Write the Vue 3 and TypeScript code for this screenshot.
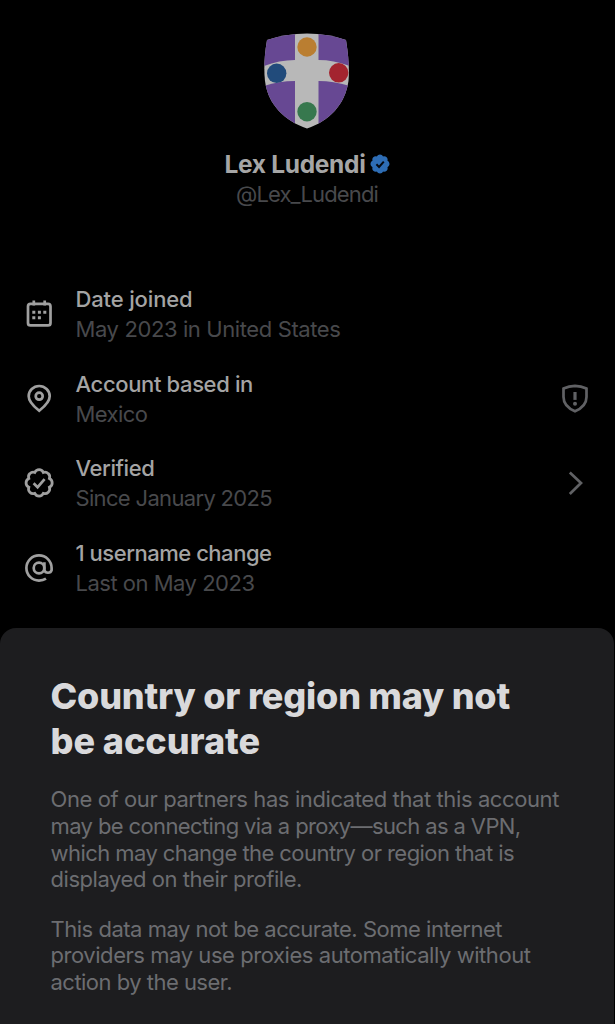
<script setup lang="ts">
import type { Directive } from 'vue'

interface Line {
  text: string
  width: number
}

interface Row {
  icon: 'calendar' | 'pin' | 'verified' | 'at'
  title: Line
  detail: Line
  action?: 'shield' | 'chevron'
}

// Tracks a line of text so that it spans the given width.
const vFit: Directive<HTMLElement, number> = {
  mounted(el, { value }) {
    const count = el.textContent?.length ?? 1
    const natural = el.getBoundingClientRect().width
    el.style.letterSpacing = `${(value - natural) / count}px`
  },
}

const rows: Row[] = [
  {
    icon: 'calendar',
    title: { text: 'Date joined', width: 117 },
    detail: { text: 'May 2023 in United States', width: 265 },
  },
  {
    icon: 'pin',
    title: { text: 'Account based in', width: 177.5 },
    detail: { text: 'Mexico', width: 72 },
    action: 'shield',
  },
  {
    icon: 'verified',
    title: { text: 'Verified', width: 79 },
    detail: { text: 'Since January 2025', width: 196.5 },
    action: 'chevron',
  },
  {
    icon: 'at',
    title: { text: '1 username change', width: 196 },
    detail: { text: 'Last on May 2023', width: 179 },
  },
]

const heading: Line[] = [
  { text: 'Country or region may not', width: 459.5 },
  { text: 'be accurate', width: 209.5 },
]

const paragraphs: Line[][] = [
  [
    { text: 'One of our partners has indicated that this account', width: 508.5 },
    { text: 'may be connecting via a proxy—such as a VPN,', width: 470 },
    { text: 'which may change the country or region that is', width: 463.5 },
    { text: 'displayed on their profile.', width: 251.5 },
  ],
  [
    { text: 'This data may not be accurate. Some internet', width: 451.5 },
    { text: 'providers may use proxies automatically without', width: 480 },
    { text: 'action by the user.', width: 181.5 },
  ],
]

const badge =
  'M20.4 12c0-1.3-.8-2.4-1.9-3 .4-1.2.1-2.6-.8-3.4-.9-.9-2.2-1.2-3.4-.8-.5-1.2-1.6-1.9-2.9-1.9s-2.4.7-3 1.9c-1.2-.4-2.5-.1-3.4.8-.9.8-1.1 2.2-.7 3.4-1.2.6-1.9 1.7-1.9 3s.7 2.4 1.9 3c-.4 1.2-.2 2.6.7 3.4.9.9 2.2 1.2 3.4.8.6 1.2 1.7 1.9 3 1.9s2.4-.7 2.9-1.9c1.2.4 2.5.1 3.4-.8.9-.8 1.2-2.2.8-3.4 1.1-.6 1.9-1.7 1.9-3z'
</script>

<template>
  <main class="screen">
    <header class="profile">
      <svg class="crest" width="86" height="96" viewBox="0 0 86 96">
        <defs>
          <clipPath id="crest-shape">
            <path d="M3 7Q22 .5 43 .5T82 7Q86 32 84.500 48C81 72 65 88 43 95.500C21 88 4 72 1 48Q-1 30 3 7Z" />
          </clipPath>
        </defs>
        <g clip-path="url(#crest-shape)">
          <rect width="86" height="96" fill="#b8b8b8" />
          <path d="M0 0H31V27Q15 27 0 33Z" fill="#674893" />
          <path d="M54.500 0H86V33Q70 27 54.500 27Z" fill="#674893" />
          <path d="M0 53Q15 48 31 48V96H0Z" fill="#674893" />
          <path d="M54.500 48Q70 48 86 53V96H54.500Z" fill="#674893" />
        </g>
        <circle cx="43" cy="14" r="9.700" fill="#ba7e31" />
        <circle cx="12.700" cy="40.300" r="9.700" fill="#214b7b" />
        <circle cx="74.700" cy="39.800" r="9.700" fill="#a3242f" />
        <circle cx="43" cy="78.700" r="9.700" fill="#37784e" />
      </svg>
      <div class="name">
        <span v-fit="141">Lex Ludendi</span>
        <svg width="20" height="20" viewBox="1.900 2.500 19 19">
          <path :d="badge" fill="#2e6db5" />
          <path d="M8 12.300l2.500 2.500 4.500-5" fill="none" stroke="#050a12" stroke-width="1.900" />
        </svg>
      </div>
      <div class="handle"><span v-fit="142">@Lex_Ludendi</span></div>
    </header>

    <ul class="facts">
      <li v-for="row in rows" :key="row.title.text" class="fact">
        <svg class="icon" width="30" height="30" viewBox="0 0 30 30">
          <template v-if="row.icon === 'calendar'">
            <rect x="4" y="4.900" width="22.500" height="21.500" rx="2.500" />
            <path d="M9.800 1.500v5M20.700 1.500v5" />
            <path
              class="solid"
              d="M8.300 11.800h3v3h-3zM13.900 11.800h3v3h-3zM19.300 11.800h3v3h-3zM8.300 17.200h3v3h-3zM13.900 17.200h3v3h-3z"
            />
          </template>
          <template v-else-if="row.icon === 'pin'">
            <path d="M15.200 26.700C11 23.300 4.700 18.500 4.700 12.200a10.500 10.200 0 0 1 21 0C25.700 18.500 19.400 23.300 15.200 26.700Z" />
            <circle cx="15.200" cy="12.200" r="3.500" />
          </template>
          <template v-else-if="row.icon === 'verified'">
            <g transform="translate(-1.400 -2.500) scale(1.450)">
              <path :d="badge" stroke-width="1.900" />
            </g>
            <path d="M9.600 15.300l4 3.900 7-8" />
          </template>
          <template v-else>
            <circle cx="15" cy="15" r="5.300" />
            <path d="M20.400 9.300v7.900a3.700 3.300 0 0 0 7.200 0V15A12.600 12.600 0 1 0 15 27.600c2.600 0 4.800-.5 7-1.900" />
          </template>
        </svg>

        <div class="copy">
          <div class="fact-title"><span v-fit="row.title.width">{{ row.title.text }}</span></div>
          <div class="fact-detail"><span v-fit="row.detail.width">{{ row.detail.text }}</span></div>
        </div>

        <svg v-if="row.action" class="action" width="30" height="30" viewBox="0 0 30 30">
          <template v-if="row.action === 'shield'">
            <path d="M15 1.900Q21 2 26.500 4.500V13C26.500 20 21.500 24.500 15 27.300C8.500 24.500 3.500 20 3.500 13V4.500Q9 2 15 1.900Z" />
            <path d="M15 8v7.900" stroke-width="3.200" />
            <circle class="solid" cx="15" cy="19.700" r="2" />
          </template>
          <path v-else d="M9.800 4.500L21 15L9.800 26" />
        </svg>
      </li>
    </ul>

    <section class="sheet">
      <h1 class="heading">
        <span v-for="line in heading" :key="line.text" class="line">
          <span v-fit="line.width">{{ line.text }}</span>
        </span>
      </h1>
      <p v-for="(lines, i) in paragraphs" :key="i" class="paragraph">
        <span v-for="line in lines" :key="line.text" class="line">
          <span v-fit="line.width">{{ line.text }}</span>
        </span>
      </p>
    </section>
  </main>
</template>

<style>
body {
  margin: 0;
  background: #000;
}
</style>

<style scoped>
.screen {
  box-sizing: border-box;
  width: 615px;
  height: 1024px;
  overflow: hidden;
  background: #000;
  font-family: Inter, "Liberation Sans", sans-serif;
  display: flex;
  flex-direction: column;
  white-space: nowrap;
}

.profile {
  height: 284px;
  padding: 33px 1px 0 0;
  box-sizing: border-box;
  display: flex;
  flex-direction: column;
  align-items: center;
}

.crest {
  display: block;
}

.name {
  display: flex;
  align-items: center;
  gap: 4px;
  height: 30px;
  margin-top: 20px;
  color: #a6a6a6;
  font-size: 24.500px;
  font-weight: 700;
}

.handle {
  height: 30px;
  line-height: 30px;
  color: #48494c;
  font-size: 22px;
}

.facts {
  margin: 0;
  padding: 0;
  list-style: none;
}

.fact {
  display: flex;
  align-items: center;
  height: 60px;
  margin-bottom: 24.700px;
  padding: 0 25px 0 24px;
}

.icon,
.action {
  flex: none;
  fill: none;
  stroke: #a0a0a0;
  stroke-width: 2.700;
}

.action {
  stroke: #606164;
}

.icon .solid {
  fill: #a0a0a0;
  stroke: none;
}

.action .solid {
  fill: #606164;
  stroke: none;
}

.copy {
  flex: 1;
  margin-left: 21.500px;
}

.fact-title,
.fact-detail {
  height: 30px;
  line-height: 30px;
  font-size: 22px;
}

.fact-title {
  color: #a4a4a4;
  font-weight: 550;
}

.fact-detail {
  color: #48494c;
}

.sheet {
  flex: none;
  box-sizing: border-box;
  height: 396px;
  margin: 5px 1px 0 0;
  padding: 46px 50.500px 0;
  background: #1d1d1f;
  border-radius: 16px 16px 0 0;
}

.line {
  display: block;
}

.heading {
  margin: 0;
  color: #d9d9db;
  font-size: 36px;
  line-height: 45px;
  font-weight: 800;
}

.paragraph {
  margin: 22.500px 0 0;
  color: #6c6d71;
  font-size: 22px;
  line-height: 26.700px;
}
</style>
